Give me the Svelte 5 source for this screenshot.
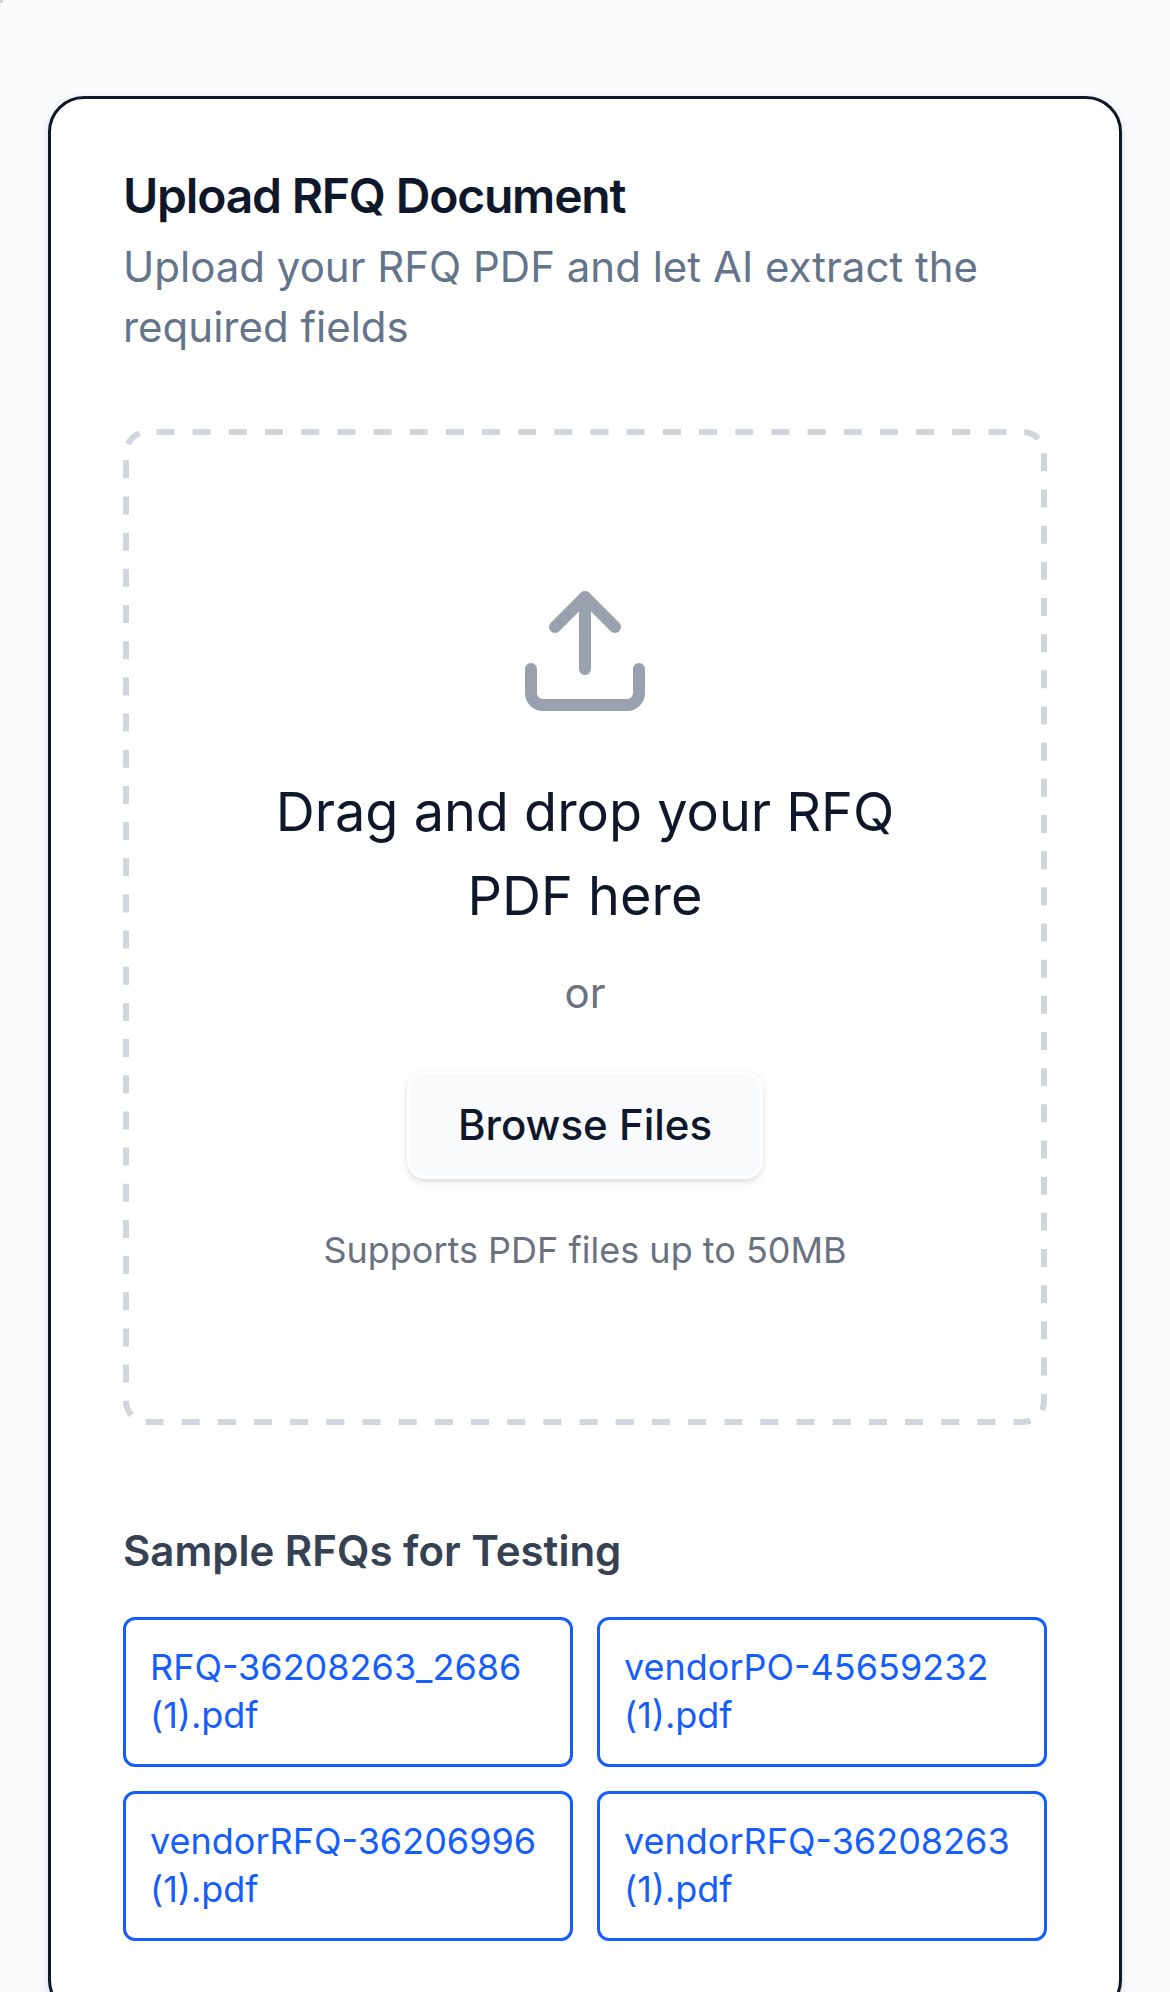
<script>
  const samples = [
    'RFQ-36208263_2686 (1).pdf',
    'vendorPO-45659232 (1).pdf',
    'vendorRFQ-36206996 (1).pdf',
    'vendorRFQ-36208263 (1).pdf'
  ];
</script>

<div class="page">
  <span class="marker"></span>
  <main class="card">
    <header>
      <h1>Upload RFQ Document</h1>
      <p>Upload your RFQ PDF and let AI extract the required fields</p>
    </header>

    <section class="dropzone">
      <!-- Dashes follow the outer edge; the half outside the rounded box is clipped -->
      <svg class="outline" aria-hidden="true">
        <rect width="100%" height="100%" rx="24" />
      </svg>
      <svg class="icon" viewBox="0 0 24 24" fill="none" stroke="currentColor" stroke-width="2" stroke-linecap="round" stroke-linejoin="round">
        <path d="M21 15v4a2 2 0 0 1-2 2H5a2 2 0 0 1-2-2v-4" />
        <polyline points="17 8 12 3 7 8" />
        <line x1="12" x2="12" y1="3" y2="15" />
      </svg>
      <p class="lead">Drag and drop your RFQ PDF here</p>
      <p class="or">or</p>
      <button type="button">Browse Files</button>
      <p class="hint">Supports PDF files up to 50MB</p>
    </section>

    <section class="samples">
      <h2>Sample RFQs for Testing</h2>
      <div class="grid">
        {#each samples as name}
          <a href="#sample">{name}</a>
        {/each}
      </div>
    </section>
  </main>
</div>

<style>
  :global(body) {
    margin: 0;
    background: #f9fafc;
  }
  .page {
    position: relative;
    box-sizing: border-box;
    height: 1992px;
    padding: 96px 48px 0;
    overflow: hidden;
    background: #f9fafc;
    color: #0f172a;
    font-family: Inter, sans-serif;
    font-size: 42px;
    line-height: 60px;
  }
  .page * {
    box-sizing: border-box;
    margin: 0;
  }
  .marker {
    position: absolute;
    top: 0;
    left: 0;
    width: 3px;
    height: 3px;
    background: #d1d3d6;
  }
  .card {
    padding: 72px;
    border: 3px solid #0f172a;
    border-radius: 36px;
    background: #fff;
    box-shadow: 0 3px 9px rgba(0, 0, 0, 0.1), 0 3px 6px -3px rgba(0, 0, 0, 0.1);
  }
  header {
    display: flex;
    flex-direction: column;
    gap: 16px;
    padding-bottom: 72px;
  }
  h1 {
    font-size: 48px;
    font-weight: 600;
    line-height: 50px;
    letter-spacing: -0.025em;
  }
  header p {
    color: #64748b;
  }
  .dropzone {
    position: relative;
    display: flex;
    flex-direction: column;
    align-items: center;
    padding: 150px;
    text-align: center;
  }
  .outline {
    position: absolute;
    inset: 0;
    width: 100%;
    height: 100%;
    overflow: hidden;
    border-radius: 24px;
    pointer-events: none;
  }
  .outline rect {
    fill: none;
    stroke: #d1d5dc;
    stroke-width: 12px;
    stroke-dasharray: 18 18.17;
    stroke-dashoffset: -9.5;
  }
  .page .icon {
    display: block;
    width: 144px;
    height: 144px;
    margin-bottom: 47px;
    color: #99a1af;
  }
  .page .lead {
    margin-bottom: 25px;
    font-size: 54px;
    line-height: 84px;
  }
  .page .or {
    margin-bottom: 48px;
    color: #6a7282;
  }
  .page button {
    height: 108px;
    margin-bottom: 47px;
    padding: 0 48px;
    border: 3px solid #fff;
    border-radius: 18px;
    background: #f9fafc;
    color: #0f172a;
    font: 500 42px/60px Inter, sans-serif;
    box-shadow: 0 3px 9px rgba(0, 0, 0, 0.1), 0 3px 6px -3px rgba(0, 0, 0, 0.1);
  }
  .page .hint {
    margin-bottom: 1px;
    color: #6a7282;
    font-size: 36px;
    line-height: 48px;
  }
  .samples {
    display: flex;
    flex-direction: column;
    gap: 36px;
    padding-top: 96px;
  }
  h2 {
    color: #364153;
    font-size: 42px;
    font-weight: 600;
    line-height: 60px;
  }
  .grid {
    display: grid;
    grid-template-columns: 1fr 1fr;
    gap: 24px;
  }
  a {
    padding: 23px 24px 25px;
    border: 3px solid #155dfc;
    border-radius: 12px;
    color: #155dfc;
    font-size: 36px;
    line-height: 48px;
    text-decoration: none;
  }
</style>
